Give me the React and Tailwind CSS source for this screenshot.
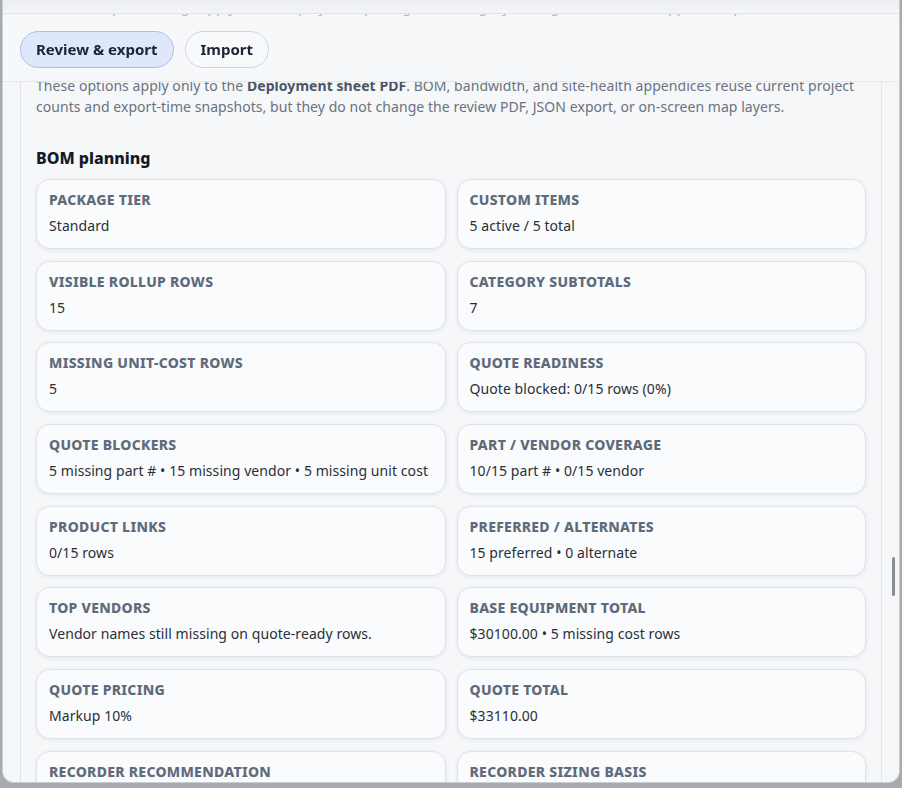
import React from 'react';

const tiles = [
  ['Package tier', 'Standard'],
  ['Custom items', '5 active / 5 total'],
  ['Visible rollup rows', '15'],
  ['Category subtotals', '7'],
  ['Missing unit-cost rows', '5'],
  ['Quote readiness', 'Quote blocked: 0/15 rows (0%)'],
  ['Quote blockers', '5 missing part # • 15 missing vendor • 5 missing unit cost'],
  ['Part / vendor coverage', '10/15 part # • 0/15 vendor'],
  ['Product links', '0/15 rows'],
  ['Preferred / alternates', '15 preferred • 0 alternate'],
  ['Top vendors', 'Vendor names still missing on quote-ready rows.'],
  ['Base equipment total', '$30100.00 • 5 missing cost rows'],
  ['Quote pricing', 'Markup 10%'],
  ['Quote total', '$33110.00'],
  ['Recorder recommendation', 'NVR-16 • 16 channels'],
  ['Recorder sizing basis', '15 cameras • 30 days retention'],
];

function Tile({ label, value }) {
  return (
    <div className="rounded-[14px] border border-[#dfe3e8] bg-[#fafbfc] px-[12px] pt-[11px] pb-[12px] shadow-[0_1px_4px_rgba(15,23,42,0.07)]">
      <div className="text-[14px] leading-[18px] font-extrabold uppercase tracking-[0.02em] text-[#5f6b7b]">{label}</div>
      <div className="mt-[7px] text-[14px] leading-[20px] tracking-[0.005em] text-[#2a2f38]">{value}</div>
    </div>
  );
}

export default function App() {
  return (
    <div className="h-[788px] w-[902px] bg-[#a7aab0] pl-[2px] pr-[2px]" style={{ fontFamily: '"Noto Sans", "Open Sans", sans-serif' }}>
      <div className="flex h-[783px] flex-col overflow-hidden rounded-b-[12px] border-x border-b border-[#c9ccd1] bg-[#f4f6f8]">
        <div className="h-[14px] shrink-0 border-b border-[#e1e4e8] bg-gradient-to-b from-[#eceef1] to-[#f4f5f7]" />
        <div className="relative flex-1 overflow-hidden">
          <div className="h-[3px] overflow-hidden pl-[94px] text-[14px] leading-[20px] text-[#b3b8c0]">
            <div className="-translate-y-[17px] whitespace-nowrap">
              Export settings apply to the deployment package, including layout, legend, sheet and appendix options.
            </div>
          </div>

          <div className="absolute inset-x-0 top-[3px] z-10 flex h-[65px] items-start gap-[11px] border-b border-[#e4e7eb] bg-[#f6f8fa]/85 pl-[17px] pt-[14px] backdrop-blur-sm">
            <button className="h-[37px] rounded-full border border-[#a9c0ec] bg-[#dfe8fb] px-[15px] text-[15px] font-bold text-[#1d2433]">
              Review &amp; export
            </button>
            <button className="h-[37px] rounded-full border border-[#cfd3d9] bg-[#f8f9fb] px-[15px] text-[15px] font-bold text-[#1d2433]">
              Import
            </button>
          </div>

          <div className="flex pl-[17px] pr-[17px] pt-[51px]">
            <div className="flex-1 rounded-t-[14px] border-x border-t border-[#e1e5ea] bg-[#f5f7f9] px-[15px] pt-[6px]">
              <p className="text-[14px] leading-[21px] tracking-[0.004em] text-[#6b7280]">
                These options apply only to the <span className="font-bold text-[#4b5563]">Deployment sheet PDF</span>. BOM, bandwidth, and site-health appendices reuse current project counts and export-time snapshots, but they do not change the review PDF, JSON export, or on-screen map layers.
              </p>
              <h3 className="mt-[29px] mb-[9px] text-[16px] leading-[24px] font-extrabold text-[#141a24]">BOM planning</h3>
              <div className="grid grid-cols-2 gap-x-[11px] gap-y-[11.7px]">
                {tiles.map(([label, value]) => (
                  <Tile key={label} label={label} value={value} />
                ))}
              </div>
            </div>
          </div>

          <div className="absolute right-[4px] top-[543px] z-20 h-[39px] w-[3px] rounded-full bg-[#8a8d92]" />
        </div>
      </div>
    </div>
  );
}
